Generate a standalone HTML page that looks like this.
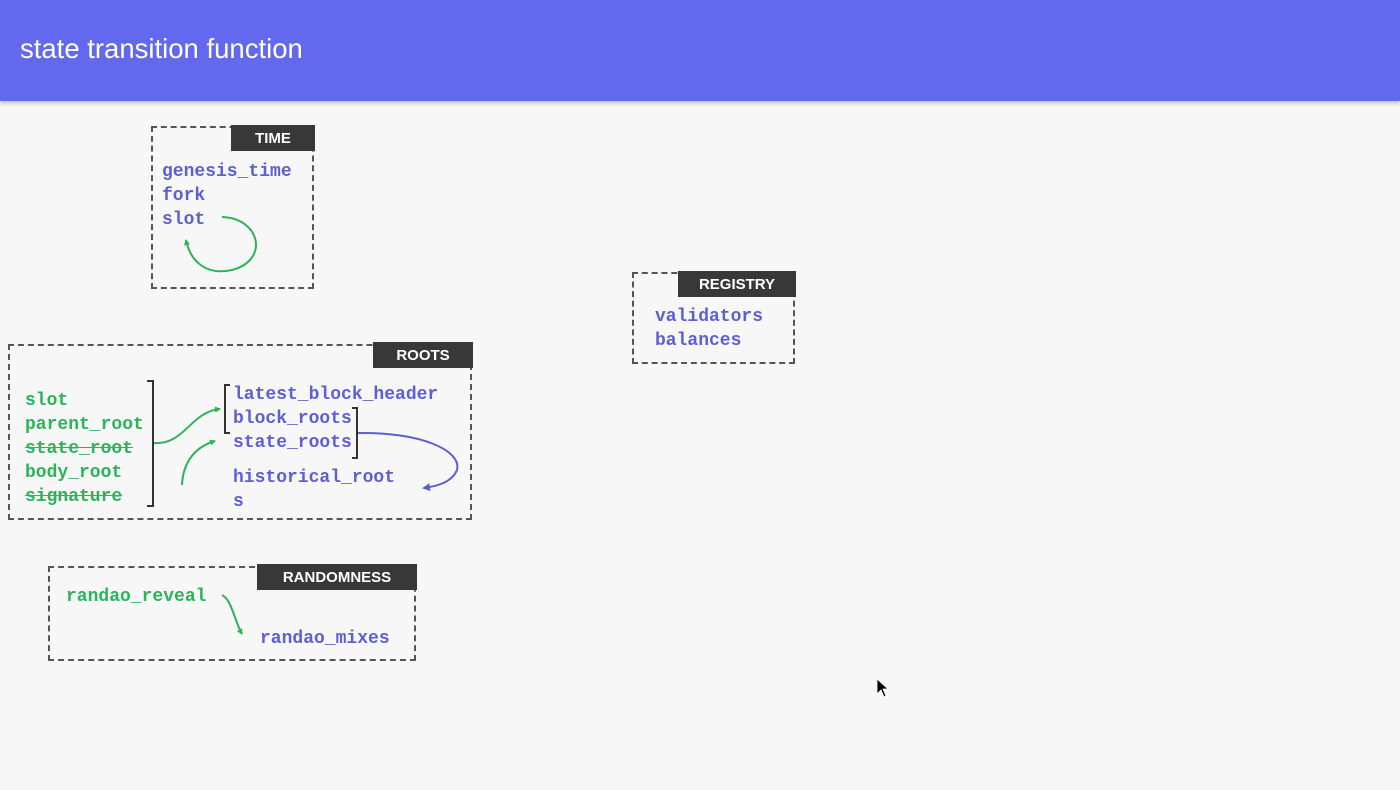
<!DOCTYPE html>
<html><head><meta charset="utf-8"><style>
body{margin:0;width:1400px;height:790px;background:#f7f7f7;position:relative;overflow:hidden;font-family:"Liberation Sans",sans-serif}
.hdr{position:absolute;left:0;top:0;width:1400px;height:101px;background:#6369ee;box-shadow:0 2px 4px rgba(0,0,0,.25)}
.hdr span{position:absolute;left:20px;top:33px;color:#fff;font-size:27.5px}
.box{position:absolute;border:2px dashed #555;box-sizing:border-box}
.lab{position:absolute;background:#383838;color:#fff;font-weight:bold;font-size:15px;text-align:center;line-height:28px;height:26px}
.t{position:absolute;font-family:"Liberation Mono",monospace;font-weight:bold;font-size:18px;line-height:24px;white-space:pre}
.b{color:#5d5fd6}.g{color:#2db35a}
.s{text-decoration:line-through}
svg{position:absolute;left:0;top:0}
</style></head><body>
<div class="hdr"><span>state transition function</span></div>

<div class="box" style="left:151px;top:126px;width:163px;height:163px"></div>
<div class="lab" style="left:231px;top:125px;width:84px">TIME</div>
<div class="t b" style="left:162px;top:160px">genesis_time
fork
slot</div>

<div class="box" style="left:632px;top:272px;width:163px;height:92px"></div>
<div class="lab" style="left:678px;top:271px;width:118px">REGISTRY</div>
<div class="t b" style="left:655px;top:305px">validators
balances</div>

<div class="box" style="left:8px;top:344px;width:464px;height:176px"></div>
<div class="lab" style="left:373px;top:342px;width:100px">ROOTS</div>
<div class="t g" style="left:25px;top:389px">slot
parent_root
<span class="s">state_root</span>
body_root
<span class="s">signature</span></div>
<div class="t b" style="left:233px;top:383px">latest_block_header
block_roots
state_roots</div>
<div class="t b" style="left:233px;top:466px">historical_root
s</div>

<div class="box" style="left:48px;top:566px;width:368px;height:95px"></div>
<div class="lab" style="left:257px;top:564px;width:160px">RANDOMNESS</div>
<div class="t g" style="left:66px;top:585px">randao_reveal</div>
<div class="t b" style="left:260px;top:627px">randao_mixes</div>

<svg width="1400" height="790" fill="none">
<defs>
<marker id="ag" markerWidth="6" markerHeight="6" refX="5" refY="3" orient="auto" markerUnits="userSpaceOnUse"><path d="M0,0 L6,3 L0,6z" fill="#2db35a"/></marker>
<marker id="ab" markerWidth="8" markerHeight="8" refX="6" refY="4" orient="auto" markerUnits="userSpaceOnUse"><path d="M0,0 L8,4 L0,8z" fill="#5d5fd6"/></marker>
</defs>
<path d="M222,217 C260,218 270,260 232,270 C205,276 190,260 186,240" stroke="#2db35a" stroke-width="2" marker-end="url(#ag)"/>
<path d="M147,381 H153 V506 H147" stroke="#333" stroke-width="2"/>
<path d="M230,385 H225 V433 H230" stroke="#333" stroke-width="2"/>
<path d="M352,408 H357 V458 H352" stroke="#333" stroke-width="2"/>
<path d="M154,443 C185,445 190,412 220,409" stroke="#2db35a" stroke-width="2" marker-end="url(#ag)"/>
<path d="M182,485 C183,462 195,447 215,441" stroke="#2db35a" stroke-width="2" marker-end="url(#ag)"/>
<path d="M358,433 C420,432 462,450 457,470 C452,482 438,486 424,488" stroke="#5d5fd6" stroke-width="2" marker-end="url(#ab)"/>
<path d="M222,595 C232,600 234,620 242,634" stroke="#2db35a" stroke-width="2" marker-end="url(#ag)"/>
<path d="M877,679 L877,694 L881,690 L884,697 L886,696 L883,689 L888,689 Z" fill="#000" stroke="#fff" stroke-width="0.8"/>
</svg>
</body></html>
